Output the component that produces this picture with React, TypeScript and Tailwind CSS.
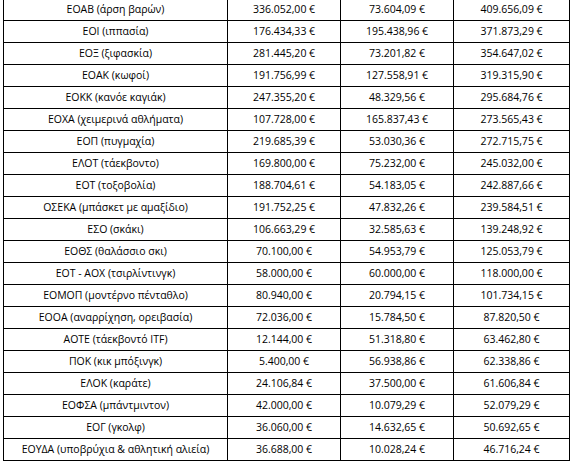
import React from 'react';

const rows: [string, string, string, string][] = [
  ['ΕΟΑΒ (άρση βαρών)', '336.052,00 €', '73.604,09 €', '409.656,09 €'],
  ['ΕΟΙ (ιππασία)', '176.434,33 €', '195.438,96 €', '371.873,29 €'],
  ['ΕΟΞ (ξιφασκία)', '281.445,20 €', '73.201,82 €', '354.647,02 €'],
  ['ΕΟΑΚ (κωφοί)', '191.756,99 €', '127.558,91 €', '319.315,90 €'],
  ['ΕΟΚΚ (κανόε καγιάκ)', '247.355,20 €', '48.329,56 €', '295.684,76 €'],
  ['ΕΟΧΑ (χειμερινά αθλήματα)', '107.728,00 €', '165.837,43 €', '273.565,43 €'],
  ['ΕΟΠ (πυγμαχία)', '219.685,39 €', '53.030,36 €', '272.715,75 €'],
  ['ΕΛΟΤ (τάεκβοντο)', '169.800,00 €', '75.232,00 €', '245.032,00 €'],
  ['ΕΟΤ (τοξοβολία)', '188.704,61 €', '54.183,05 €', '242.887,66 €'],
  ['ΟΣΕΚΑ (μπάσκετ με αμαξίδιο)', '191.752,25 €', '47.832,26 €', '239.584,51 €'],
  ['ΕΣΟ (σκάκι)', '106.663,29 €', '32.585,63 €', '139.248,92 €'],
  ['ΕΟΘΣ (θαλάσσιο σκι)', '70.100,00 €', '54.953,79 €', '125.053,79 €'],
  ['ΕΟΤ - ΑΟΧ (τσιρλίντινγκ)', '58.000,00 €', '60.000,00 €', '118.000,00 €'],
  ['ΕΟΜΟΠ (μοντέρνο πένταθλο)', '80.940,00 €', '20.794,15 €', '101.734,15 €'],
  ['ΕΟΟΑ (αναρρίχηση, ορειβασία)', '72.036,00 €', '15.784,50 €', '87.820,50 €'],
  ['ΑΟΤΕ (τάεκβοντό ITF)', '12.144,00 €', '51.318,80 €', '63.462,80 €'],
  ['ΠΟΚ (κικ μπόξινγκ)', '5.400,00 €', '56.938,86 €', '62.338,86 €'],
  ['ΕΛΟΚ (καράτε)', '24.106,84 €', '37.500,00 €', '61.606,84 €'],
  ['ΕΟΦΣΑ (μπάντμιντον)', '42.000,00 €', '10.079,29 €', '52.079,29 €'],
  ['ΕΟΓ (γκολφ)', '36.060,00 €', '14.632,65 €', '50.692,65 €'],
  ['ΕΟΥΔΑ (υποβρύχια & αθλητική αλιεία)', '36.688,00 €', '10.028,24 €', '46.716,24 €'],
];

const App: React.FC = () => {
  return (
    <div className="w-[575px] h-[465px] bg-white overflow-hidden">
      <div
        className="ml-[3px] -mt-[2px] w-[567px] grid grid-cols-[224px_113px_113px_116px] border-l border-t border-black text-[10.5px] text-black"
        style={{ fontFamily: '"Open Sans", sans-serif' }}
      >
        {rows.map((row, i) =>
          row.map((cell, j) => (
            <div
              key={`${i}-${j}`}
              className="h-[22px] flex items-center justify-center border-r border-b border-black whitespace-nowrap leading-none"
            >
              {cell}
            </div>
          ))
        )}
      </div>
    </div>
  );
};

export default App;
